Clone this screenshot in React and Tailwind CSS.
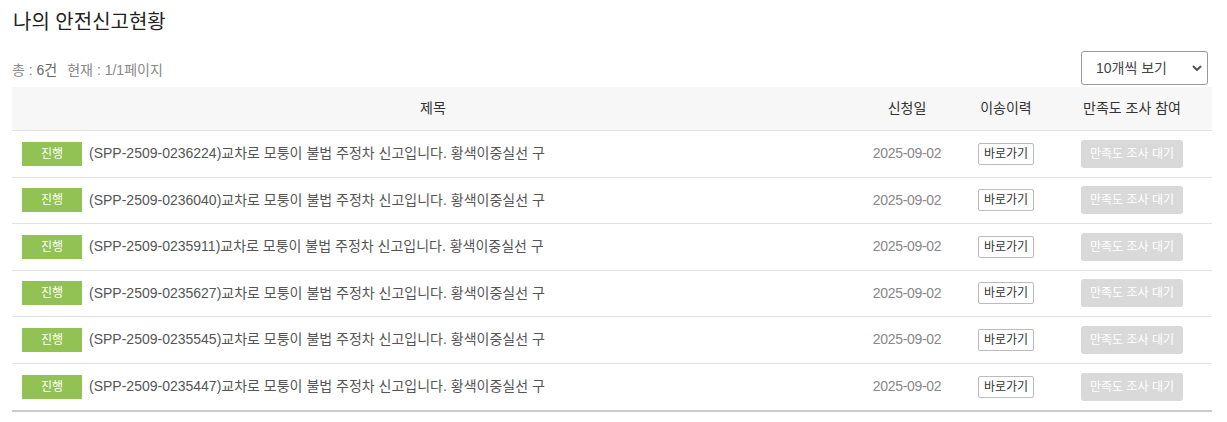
const rows = [
  'SPP-2509-0236224',
  'SPP-2509-0236040',
  'SPP-2509-0235911',
  'SPP-2509-0235627',
  'SPP-2509-0235545',
  'SPP-2509-0235447',
];

function ChevronDown() {
  return (
    <svg width="12" height="12" viewBox="0 0 12 12" className="text-[#555]">
      <path d="M2.5 4.5 L6 8 L9.5 4.5" fill="none" stroke="currentColor" strokeWidth="2" strokeLinecap="round" strokeLinejoin="round" />
    </svg>
  );
}

export default function App() {
  return (
    <div
      className="bg-white w-[1227px] h-[422px] px-3 pt-[8px]"
      style={{ fontFamily: '"Liberation Sans", "Noto Sans CJK KR", sans-serif' }}
    >
      {/* Title */}
      <h2 className="text-[20px] leading-[28px] text-[#222] pl-[1px]">나의 안전신고현황</h2>

      {/* Summary + page size */}
      <div className="flex items-end justify-between mt-[15px]">
        <p className="text-[14px] text-[#888] pb-[6px]">
          총 : <span className="text-[#666]">6건</span>
          <span className="ml-[10px]">현재 : 1/1페이지</span>
        </p>
        <div className="flex items-center justify-between w-[127px] h-[34px] border border-[#999] rounded-[3px] pl-[14px] pr-[4px] mr-[7px] mb-[2px]">
          <span className="text-[14px] text-[#444]">10개씩 보기</span>
          <ChevronDown />
        </div>
      </div>

      {/* Table */}
      <div className="w-[1200px] border-b-2 border-[#ccc]">
        <div className="flex h-[44px] items-center bg-[#f7f7f7] border-b border-[#e2e2e2] text-[14px] text-[#333]">
          <div className="w-[842px] text-center">제목</div>
          <div className="w-[106px] text-center">신청일</div>
          <div className="w-[92px] text-center">이송이력</div>
          <div className="w-[160px] text-center">만족도 조사 참여</div>
        </div>
        {rows.map((id, i) => (
          <div
            key={id}
            className={`flex items-center h-[46.5px] ${i < rows.length - 1 ? 'border-b border-[#e2e2e2]' : ''}`}
          >
            <div className="w-[842px] flex items-center pl-[10px]">
              <span className="w-[60px] h-[24px] flex items-center justify-center bg-[#92c254] text-white text-[12px]">
                진행
              </span>
              <span className="ml-[7px] text-[14px] text-[#555]">
                ({id})교차로 모퉁이 불법 주정차 신고입니다. 황색이중실선 구
              </span>
            </div>
            <div className="w-[106px] text-center text-[14px] text-[#888] tracking-[-0.3px]">2025-09-02</div>
            <div className="w-[92px] flex justify-center">
              <span className="h-[22px] px-[5px] flex items-center border border-[#bbb] rounded-[2px] text-[12px] text-[#333] bg-white">
                바로가기
              </span>
            </div>
            <div className="w-[160px] flex justify-center">
              <span className="w-[102px] h-[28px] flex items-center justify-center bg-[#d9d9d9] rounded-[3px] text-[12px] text-white">
                만족도 조사 대기
              </span>
            </div>
          </div>
        ))}
      </div>
    </div>
  );
}
